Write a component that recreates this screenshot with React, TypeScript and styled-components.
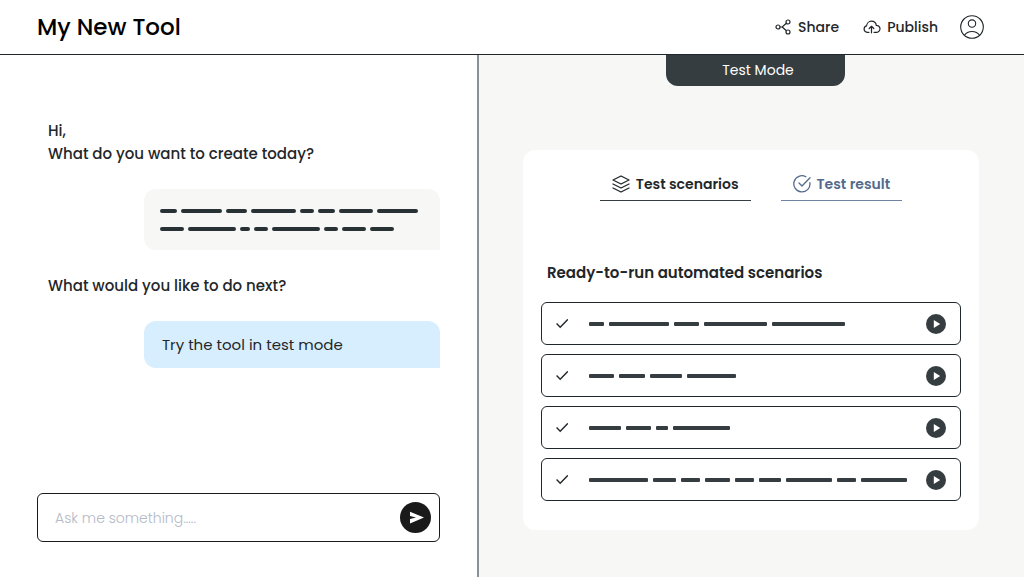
import React from "react";
import styled, { createGlobalStyle } from "styled-components";

const ink = "#1f272a";
const slate = "#353d41";
const mist = "#f7f7f6";
const steel = "#536b8b";

const GlobalStyle = createGlobalStyle`
  *, *::before, *::after { box-sizing: border-box; }
  body {
    margin: 0;
    background: #fff;
    color: ${ink};
    font-family: Poppins, Inter, "Liberation Sans", sans-serif;
  }
  button, input { font: inherit; color: inherit; }
  h1, h2, p, ul { margin: 0; padding: 0; }
  svg { display: block; flex: none; }
`;

const Page = styled.div`
  display: flex;
  flex-direction: column;
  min-height: 100vh;
`;

const Header = styled.header`
  display: flex;
  align-items: center;
  justify-content: space-between;
  height: 55px;
  padding: 0 40px 0 37px;
  border-bottom: 1px solid ${ink};
`;

const Title = styled.h1`
  font-size: 23px;
  line-height: 32px;
  font-weight: 500;
  color: #000;
`;

const Actions = styled.div`
  display: flex;
  align-items: center;
  gap: 24px;
`;

const ActionButton = styled.button`
  display: flex;
  align-items: center;
  gap: 6px;
  padding: 0;
  border: 0;
  background: none;
  font-size: 14px;
  line-height: 20px;
  font-weight: 500;
`;

const AvatarButton = styled.button`
  margin-left: -2px;
  padding: 0;
  border: 0;
  background: none;
`;

const Columns = styled.main`
  display: grid;
  grid-template-columns: 477fr 547fr;
  flex: 1;
`;

const ChatPane = styled.section`
  display: flex;
  flex-direction: column;
  justify-content: space-between;
  padding: 64px 37px 35px 37px;
`;

const Conversation = styled.div`
  display: flex;
  flex-direction: column;
  padding-left: 11px;
`;

const Prompt = styled.p`
  font-size: 15px;
  line-height: 23px;
  font-weight: 500;
`;

const Bubble = styled.div<{ $tone: "plain" | "blue" }>`
  align-self: flex-end;
  display: flex;
  flex-direction: column;
  justify-content: center;
  gap: 14px;
  width: 296px;
  max-width: 100%;
  min-height: ${(p) => (p.$tone === "blue" ? 47 : 61)}px;
  margin: 24px 0;
  padding: ${(p) => (p.$tone === "blue" ? "0 18px" : "0 16px")};
  border-radius: 12px 12px 0 12px;
  background: ${(p) => (p.$tone === "blue" ? "#d7eefe" : mist)};
  font-size: 15px;
  line-height: 23px;
`;

const Composer = styled.form`
  display: flex;
  align-items: center;
  height: 49px;
  padding: 0 8px 0 17px;
  border: 1px solid #1a1a1a;
  border-radius: 6px;
`;

const ComposerInput = styled.input`
  flex: 1;
  min-width: 0;
  padding: 0;
  border: 0;
  outline: 0;
  background: none;
  font-size: 14px;
  line-height: 20px;
  font-weight: 300;
  &::placeholder { color: #b4bac6; opacity: 1; }
`;

const SendButton = styled.button`
  display: grid;
  place-items: center;
  width: 31px;
  height: 31px;
  padding: 0;
  border: 0;
  border-radius: 50%;
  background: #1a1a1a;
`;

const TestPane = styled.section`
  display: flex;
  flex-direction: column;
  padding: 0 45px 47px 44px;
  border-left: 2px solid #8b9295;
  background: ${mist};
`;

const ModeLabel = styled.p`
  align-self: center;
  width: 179px;
  margin-left: 8px;
  padding: 5px 0 6px 6px;
  border-radius: 0 0 12px 12px;
  background: ${slate};
  color: #fff;
  font-size: 14px;
  line-height: 20px;
  text-align: center;
`;

const Card = styled.div`
  margin-top: 64px;
  padding: 24px 18px 29px;
  border-radius: 12px;
  background: #fff;
`;

const Tabs = styled.div`
  display: flex;
  justify-content: center;
  gap: 30px;
`;

const Tab = styled.button<{ $active?: boolean }>`
  display: flex;
  gap: 6px;
  align-items: center;
  padding: 0 12px 6px;
  border: 0;
  border-bottom: 1px solid ${(p) => (p.$active ? slate : "#6f84a0")};
  background: none;
  color: ${(p) => (p.$active ? ink : steel)};
  font-size: 14px;
  line-height: 20px;
  font-weight: 600;
`;

const SectionTitle = styled.h2`
  margin: 60px 0 18px 6px;
  font-size: 15px;
  line-height: 23px;
  font-weight: 600;
`;

const ScenarioList = styled.ul`
  display: flex;
  flex-direction: column;
  gap: 9px;
  list-style: none;
`;

const Scenario = styled.li`
  display: grid;
  grid-template-columns: 33px 1fr auto;
  align-items: center;
  height: 43px;
  padding: 0 14px;
  border: 1px solid ${ink};
  border-radius: 6px;
`;

const PlayButton = styled.button`
  display: grid;
  place-items: center;
  width: 20px;
  height: 20px;
  padding: 0;
  border: 0;
  border-radius: 50%;
  background: ${slate};
`;

const DashRow = styled.div<{ $gap: number }>`
  display: flex;
  gap: ${(p) => p.$gap}px;
`;

const Dash = styled.span<{ $width: number; $round?: boolean }>`
  width: ${(p) => p.$width}px;
  height: 4px;
  border-radius: ${(p) => (p.$round ? 2 : 1)}px;
  background: ${(p) => (p.$round ? "#283235" : slate)};
`;

const messageDashes = [
  [17, 41, 21, 45, 14, 17, 34, 41],
  [24, 48, 10, 14, 48, 14, 24, 24],
];

const scenarios = [
  [15, 60, 25, 63, 73],
  [25, 26, 32, 49],
  [32, 25, 12, 57],
  [59, 23, 19, 25, 19, 22, 46, 19, 46],
];

const ShareIcon = () => (
  <svg width="17" height="16" viewBox="0 0 17 16" fill="none" stroke={ink} strokeWidth="1.2">
    <circle cx="3" cy="8" r="2" />
    <circle cx="13" cy="3" r="2" />
    <circle cx="13" cy="13" r="2" />
    <path d="M5 8h2.2L11.4 4.3M7.2 8l4.2 3.7" />
  </svg>
);

const CloudIcon = () => (
  <svg width="18" height="14" viewBox="0 0 18 14" fill="none" stroke={ink} strokeWidth="1.2" strokeLinecap="round" strokeLinejoin="round">
    <path d="M6 12.3H4.2A3.3 3.3 0 0 1 3.6 5.8 4.9 4.9 0 0 1 8.4 1.2a4.9 4.9 0 0 1 4.9 4.1 3.5 3.5 0 0 1 .4 7H11" />
    <path d="M8.5 12.8V6.4M6.2 8.5l2.3-2.2 2.3 2.2" />
  </svg>
);

const AvatarIcon = () => (
  <svg width="24" height="24" viewBox="0 0 24 24" fill="none" stroke={ink} strokeWidth="1.1">
    <circle cx="12" cy="12" r="11.3" />
    <circle cx="12" cy="8.6" r="3.7" />
    <path d="M4.5 20.3c1.6-2.5 4.2-3.8 7.5-3.8s5.9 1.3 7.5 3.8" />
  </svg>
);

const LayersIcon = () => (
  <svg width="18" height="18" viewBox="0 0 18 18" fill="none" stroke={ink} strokeWidth="1.3" strokeLinejoin="round" strokeLinecap="round">
    <path d="M9 1l8 4-8 4-8-4z" />
    <path d="M1 9l8 4 8-4M1 13l8 4 8-4" />
  </svg>
);

const ResultIcon = () => (
  <svg width="18" height="18" viewBox="0 0 18 18" fill="none" stroke={steel} strokeWidth="1.3" strokeLinecap="round" strokeLinejoin="round">
    <path d="M16.9 7.6A8.1 8.1 0 1 1 12.9 1.8" />
    <path d="M6 8l3 3 8-8.3" />
  </svg>
);

const CheckIcon = () => (
  <svg width="12" height="10" viewBox="0 0 12 10" fill="none" stroke={ink} strokeWidth="1.4">
    <path d="M.6 4.6L4.2 8.2 11.8.4" />
  </svg>
);

const PlayIcon = () => (
  <svg width="20" height="20" viewBox="0 0 20 20" fill="#fff">
    <path d="M7.8 6v8l6.4-4z" />
  </svg>
);

const SendIcon = () => (
  <svg width="31" height="31" viewBox="0 0 31 31" fill="#fff">
    <path d="M10 9.7L24 15.5 10 21.5v-4.4l6-1.5-6-1.5z" />
  </svg>
);

const Dashes = ({ widths, message }: { widths: number[]; message?: boolean }) => (
  <DashRow $gap={message ? 4 : 5}>
    {widths.map((width, i) => (
      <Dash key={i} $width={width} $round={message} />
    ))}
  </DashRow>
);

export default function App() {
  return (
    <Page>
      <GlobalStyle />
      <Header>
        <Title>My New Tool</Title>
        <Actions>
          <ActionButton type="button">
            <ShareIcon />
            Share
          </ActionButton>
          <ActionButton type="button">
            <CloudIcon />
            Publish
          </ActionButton>
          <AvatarButton type="button" aria-label="Account">
            <AvatarIcon />
          </AvatarButton>
        </Actions>
      </Header>
      <Columns>
        <ChatPane>
          <Conversation>
            <Prompt>
              Hi,
              <br />
              What do you want to create today?
            </Prompt>
            <Bubble $tone="plain">
              {messageDashes.map((widths, i) => (
                <Dashes key={i} widths={widths} message />
              ))}
            </Bubble>
            <Prompt>What would you like to do next?</Prompt>
            <Bubble $tone="blue">Try the tool in test mode</Bubble>
          </Conversation>
          <Composer onSubmit={(e) => e.preventDefault()}>
            <ComposerInput type="text" aria-label="Message" placeholder="Ask me something....." />
            <SendButton type="submit" aria-label="Send">
              <SendIcon />
            </SendButton>
          </Composer>
        </ChatPane>
        <TestPane>
          <ModeLabel>Test Mode</ModeLabel>
          <Card>
            <Tabs role="tablist">
              <Tab type="button" role="tab" aria-selected="true" $active>
                <LayersIcon />
                Test scenarios
              </Tab>
              <Tab type="button" role="tab" aria-selected="false">
                <ResultIcon />
                Test result
              </Tab>
            </Tabs>
            <SectionTitle>Ready-to-run automated scenarios</SectionTitle>
            <ScenarioList>
              {scenarios.map((widths, i) => (
                <Scenario key={i}>
                  <CheckIcon />
                  <Dashes widths={widths} />
                  <PlayButton type="button" aria-label={`Run scenario ${i + 1}`}>
                    <PlayIcon />
                  </PlayButton>
                </Scenario>
              ))}
            </ScenarioList>
          </Card>
        </TestPane>
      </Columns>
    </Page>
  );
}
